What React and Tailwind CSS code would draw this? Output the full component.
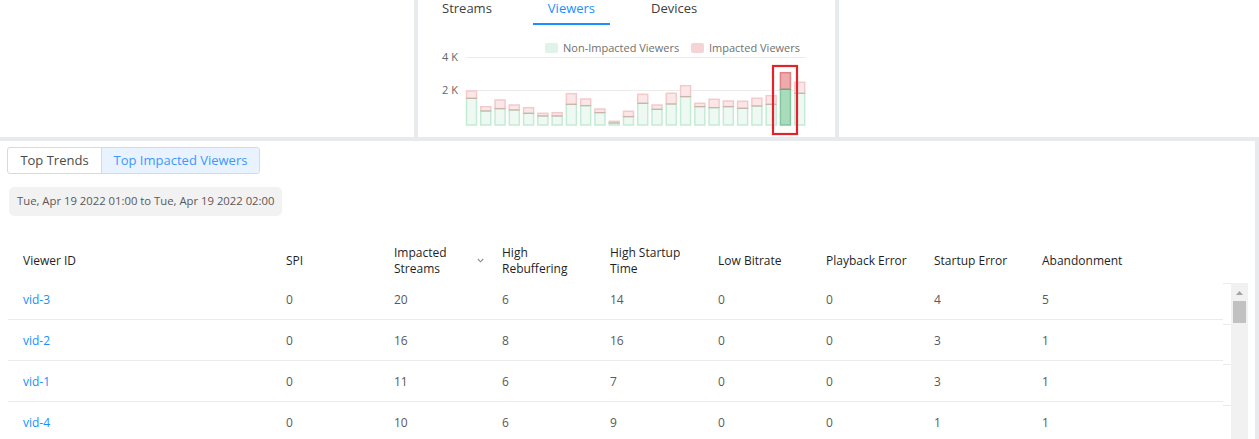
import React from 'react';

const font = { fontFamily: '"Open Sans", "Noto Sans", sans-serif' };

// [total height, non-impacted height] in px above the baseline
const bars = [
  [34, 26.7], [18.3, 14], [25, 16.3], [20, 15], [17.3, 11.7], [11.7, 9],
  [12.3, 9], [31.3, 20.7], [26, 19.3], [16, 12.3], [3.7, 2], [13.7, 8.3],
  [30.7, 21.7], [20, 15.7], [31.7, 21], [39.3, 28.3], [21.7, 18.3], [25.7, 17.3],
  [24, 18.3], [23.7, 16.7], [26.7, 19], [29.3, 20.7], [52.3, 35.7], [42.7, 31.7],
];

const rows = [
  ['vid-3', 0, 20, 6, 14, 0, 0, 4, 5],
  ['vid-2', 0, 16, 8, 16, 0, 0, 3, 1],
  ['vid-1', 0, 11, 6, 7, 0, 0, 3, 1],
  ['vid-4', 0, 10, 6, 9, 0, 0, 1, 1],
];

const ViewersChart = () => {
  const base = 100;
  return (
    <svg width="417" height="112" viewBox="0 0 417 112">
      {/* legend */}
      <rect x="127" y="18" width="13" height="10" rx="2" fill="#dff4e8" />
      <text x="145" y="26.5" fontSize="11" fill="#707070" style={font}>Non-Impacted Viewers</text>
      <rect x="273" y="18" width="13" height="10" rx="2" fill="#f6d3d5" />
      <text x="291" y="26.5" fontSize="11" fill="#707070" style={font}>Impacted Viewers</text>

      {/* axis */}
      <text x="24" y="36" fontSize="11" fill="#666" style={font}>4 K</text>
      <text x="24" y="69" fontSize="11" fill="#666" style={font}>2 K</text>
      <line x1="48" x2="388" y1="32.5" y2="32.5" stroke="#ececec" />
      <line x1="48" x2="388" y1="65.5" y2="65.5" stroke="#ececec" />

      {bars.map(([total, green], i) => {
        const x = 48.5 + i * 14.27;
        const w = 10;
        const hi = i === 22;
        return (
          <g key={i}>
            <rect
              x={x} y={base - total} width={w} height={total - green}
              fill={hi ? '#eeaaac' : '#fbe7e8'}
              stroke={hi ? '#dc8487' : '#f4c9cb'} strokeWidth="1.5"
            />
            <rect
              x={x} y={base - green} width={w} height={green}
              fill={hi ? '#a9dcbd' : '#eff9f3'}
              stroke={hi ? '#7fc99d' : '#c4ebd4'} strokeWidth="1.5"
            />
            <line
              x1={x - 0.5} x2={x + w + 0.5} y1={base - green} y2={base - green}
              stroke={hi ? '#c77272' : '#caa99f'} strokeWidth="1"
            />
          </g>
        );
      })}

      {/* selected bar highlight */}
      <rect x="355" y="41" width="24" height="68" fill="none" stroke="#e3222b" strokeWidth="2.2" />
    </svg>
  );
};

const SortIcon = () => (
  <svg width="7" height="5" viewBox="0 0 7 5" className="shrink-0">
    <path d="M0.8 1 L3.5 3.8 L6.2 1" fill="none" stroke="#8c8c8c" strokeWidth="1.1" />
  </svg>
);

const columns = [
  { key: 'id', label: 'Viewer ID', w: 'w-[263px]' },
  { key: 'spi', label: 'SPI', w: 'w-[108px]' },
  { key: 'imp', label: ['Impacted', 'Streams'], w: 'w-[108px]', sort: true },
  { key: 'reb', label: ['High', 'Rebuffering'], w: 'w-[108px]' },
  { key: 'st', label: ['High Startup', 'Time'], w: 'w-[108px]' },
  { key: 'lb', label: 'Low Bitrate', w: 'w-[108px]' },
  { key: 'pe', label: 'Playback Error', w: 'w-[108px]' },
  { key: 'se', label: 'Startup Error', w: 'w-[108px]' },
  { key: 'ab', label: 'Abandonment', w: 'flex-1' },
];

export default function App() {
  return (
    <div className="w-[1259px] h-[439px] bg-[#e8ebee] overflow-hidden flex flex-col" style={font}>
      {/* top widgets */}
      <div className="flex gap-[4px] h-[137px] shrink-0">
        <div className="w-[414px] bg-white" />
        <div className="w-[417px] bg-white flex flex-col">
          <div className="flex gap-[26px] pl-[9px] mt-[-2px] h-[27px] text-[13px] leading-[20px]">
            <div className="px-[15px] pb-[5px] text-[#404040] border-b-2 border-transparent">Streams</div>
            <div className="px-[15px] pb-[5px] text-[#1890ff] border-b-2 border-[#1890ff]">Viewers</div>
            <div className="px-[15px] pb-[5px] text-[#404040] border-b-2 border-transparent">Devices</div>
          </div>
          <ViewersChart />
        </div>
        <div className="flex-1 bg-white" />
      </div>

      {/* bottom panel */}
      <div className="mt-[4px] mr-[4px] flex-1 bg-white flex flex-col">
        <div className="pl-[7px] pt-[6px] flex">
          <div className="flex h-[27px] border border-[#d9d9d9] rounded-[3px] text-[13px] overflow-hidden">
            <div className="w-[93px] flex items-center justify-center text-[#4a4a4a]">Top Trends</div>
            <div className="w-[158px] flex items-center justify-center text-[#4096ff] bg-[#e8f3ff] border-l border-[#d9d9d9]">
              Top Impacted Viewers
            </div>
          </div>
        </div>

        <div className="pl-[9px] pt-[13px] flex">
          <div className="h-[29px] px-[8px] flex items-center rounded-[5px] bg-[#f2f2f2] text-[11.3px] text-[#595959]">
            Tue, Apr 19 2022 01:00 to Tue, Apr 19 2022 02:00
          </div>
        </div>

        {/* table */}
        <div className="ml-[8px] mt-[20px] flex flex-col">
          <div className="flex w-[1215px] h-[43px] pt-[6px] items-center text-[12px] leading-[16px] text-[#1f1f1f]">
            {columns.map((c) => (
              <div key={c.key} className={`${c.w} pl-[15px] flex items-center`}>
                {Array.isArray(c.label) ? (
                  <div className="flex flex-col">
                    <span>{c.label[0]}</span>
                    <span>{c.label[1]}</span>
                  </div>
                ) : (
                  <span>{c.label}</span>
                )}
                {c.sort && (
                  <div className="ml-auto pr-[3px] flex items-center">
                    <SortIcon />
                  </div>
                )}
              </div>
            ))}
          </div>

          <div className="flex">
            <div className="w-[1215px] flex flex-col">
              {rows.map((r, ri) => (
                <div key={ri} className="flex h-[41px] pt-[1px] items-center border-b border-[#ebebeb] text-[12px] text-[#595959]">
                  {r.map((v, ci) => (
                    <div
                      key={ci}
                      className={`${columns[ci].w} pl-[15px] ${ci === 0 ? 'text-[#1890ff]' : ''}`}
                    >
                      {v}
                    </div>
                  ))}
                </div>
              ))}
            </div>
            <div className="w-[8px] pt-[4px] flex flex-col">
              <div className="h-[41px] border-t border-[#ebebeb]" />
              <div className="h-[40px] border-t border-[#ebebeb]" />
              <div className="h-[41px] border-t border-[#ebebeb]" />
              <div className="h-[41px] border-t border-[#ebebeb]" />
            </div>
            <div className="w-[17px] mt-[4px] bg-[#f1f1f1] flex flex-col items-center">
              <svg width="9" height="6" viewBox="0 0 9 6" className="mt-[7px]">
                <path d="M4.5 1 L8 5 L1 5 Z" fill="#a3a3a3" />
              </svg>
              <div className="mt-[5px] w-[13px] h-[22px] bg-[#c1c1c1]" />
            </div>
          </div>
        </div>
      </div>
    </div>
  );
}
